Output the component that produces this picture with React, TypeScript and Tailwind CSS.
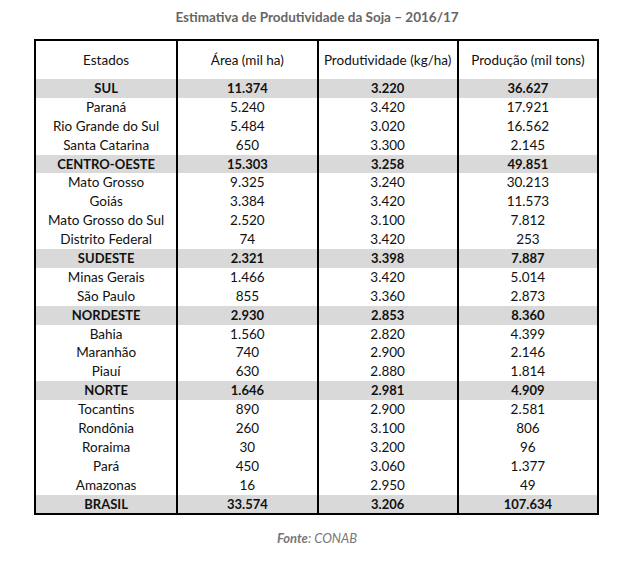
const rows: { name: string; area: string; prod: string; total: string; region?: boolean }[] = [
  { name: "SUL", area: "11.374", prod: "3.220", total: "36.627", region: true },
  { name: "Paraná", area: "5.240", prod: "3.420", total: "17.921" },
  { name: "Rio Grande do Sul", area: "5.484", prod: "3.020", total: "16.562" },
  { name: "Santa Catarina", area: "650", prod: "3.300", total: "2.145" },
  { name: "CENTRO-OESTE", area: "15.303", prod: "3.258", total: "49.851", region: true },
  { name: "Mato Grosso", area: "9.325", prod: "3.240", total: "30.213" },
  { name: "Goiás", area: "3.384", prod: "3.420", total: "11.573" },
  { name: "Mato Grosso do Sul", area: "2.520", prod: "3.100", total: "7.812" },
  { name: "Distrito Federal", area: "74", prod: "3.420", total: "253" },
  { name: "SUDESTE", area: "2.321", prod: "3.398", total: "7.887", region: true },
  { name: "Minas Gerais", area: "1.466", prod: "3.420", total: "5.014" },
  { name: "São Paulo", area: "855", prod: "3.360", total: "2.873" },
  { name: "NORDESTE", area: "2.930", prod: "2.853", total: "8.360", region: true },
  { name: "Bahia", area: "1.560", prod: "2.820", total: "4.399" },
  { name: "Maranhão", area: "740", prod: "2.900", total: "2.146" },
  { name: "Piauí", area: "630", prod: "2.880", total: "1.814" },
  { name: "NORTE", area: "1.646", prod: "2.981", total: "4.909", region: true },
  { name: "Tocantins", area: "890", prod: "2.900", total: "2.581" },
  { name: "Rondônia", area: "260", prod: "3.100", total: "806" },
  { name: "Roraima", area: "30", prod: "3.200", total: "96" },
  { name: "Pará", area: "450", prod: "3.060", total: "1.377" },
  { name: "Amazonas", area: "16", prod: "2.950", total: "49" },
  { name: "BRASIL", area: "33.574", prod: "3.206", total: "107.634", region: true },
];

const headers = ["Estados", "Área (mil ha)", "Produtividade (kg/ha)", "Produção (mil tons)"];

export default function App() {
  return (
    <div className="h-[568px] w-[634px] bg-white pt-[8px] font-['Lato',sans-serif] text-[#111]">
      <h1 className="text-center text-[13.5px] font-bold leading-[18px] text-[#666]">
        Estimativa de Produtividade da Soja – 2016/17
      </h1>

      <div className="ml-[34px] mt-[13px] w-[565px] border-2 border-black">
        <div className="grid h-[38px] grid-cols-4 text-[13.5px]">
          {headers.map((h, i) => (
            <div key={h} className={`flex items-center justify-center ${i > 0 ? "border-l-2 border-black" : ""}`}>
              {h}
            </div>
          ))}
        </div>
        {rows.map((r) => (
          <div
            key={r.name}
            className={`grid h-[18.9px] grid-cols-4 leading-[18.9px] ${r.region ? "bg-[#d9d9d9] text-[13px] font-bold" : "text-[13.5px]"}`}
          >
            <div className="text-center">{r.name}</div>
            <div className="border-l-2 border-black text-center">{r.area}</div>
            <div className="border-l-2 border-black text-center">{r.prod}</div>
            <div className="border-l-2 border-black text-center">{r.total}</div>
          </div>
        ))}
      </div>

      <p className="mt-[14px] text-center text-[13px] italic text-[#777]">
        <span className="font-bold">Fonte</span>: CONAB
      </p>
    </div>
  );
}
